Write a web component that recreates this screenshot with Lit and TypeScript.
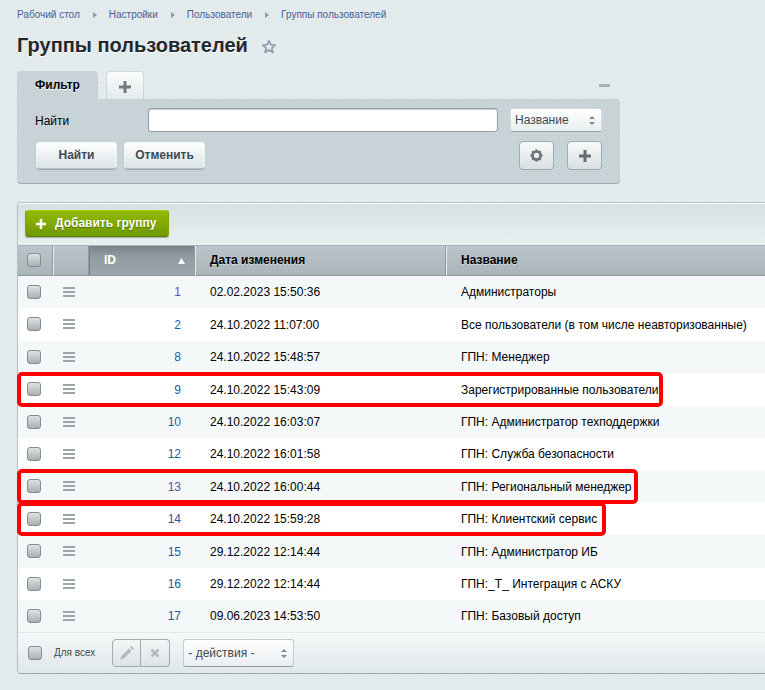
import { LitElement, html, css, svg, nothing } from "lit";
import { customElement } from "lit/decorators.js";
import { classMap } from "lit/directives/class-map.js";
import { styleMap } from "lit/directives/style-map.js";

interface Group {
  id: number;
  date: string;
  name: string;
  visited?: boolean;
  /* width of the red outline round the row */
  marked?: number;
}

const groups: Group[] = [
  { id: 1, date: "02.02.2023 15:50:36", name: "Администраторы", visited: true },
  { id: 2, date: "24.10.2022 11:07:00", name: "Все пользователи (в том числе неавторизованные)" },
  { id: 8, date: "24.10.2022 15:48:57", name: "ГПН: Менеджер" },
  { id: 9, date: "24.10.2022 15:43:09", name: "Зарегистрированные пользователи", marked: 646 },
  { id: 10, date: "24.10.2022 16:03:07", name: "ГПН: Администратор техподдержки" },
  { id: 12, date: "24.10.2022 16:01:58", name: "ГПН: Служба безопасности" },
  { id: 13, date: "24.10.2022 16:00:44", name: "ГПН: Региональный менеджер", visited: true, marked: 621 },
  { id: 14, date: "24.10.2022 15:59:28", name: "ГПН: Клиентский сервис", marked: 589 },
  { id: 15, date: "29.12.2022 12:14:44", name: "ГПН: Администратор ИБ" },
  { id: 16, date: "29.12.2022 12:14:44", name: "ГПН:_T_ Интеграция с АСКУ" },
  { id: 17, date: "09.06.2023 14:53:50", name: "ГПН: Базовый доступ" },
];

const crumbs = ["Рабочий стол", "Настройки", "Пользователи", "Группы пользователей"];

const plus = (color: string, size = 12) => html`<svg width=${size} height=${size} viewBox="0 0 12 12" aria-hidden="true">
  <path d="M4.5 0h3v4.5H12v3H7.5V12h-3V7.5H0v-3h4.5z" fill=${color} />
</svg>`;

const updown = html`<svg class="updown" width="6" height="9" viewBox="0 0 6 9" aria-hidden="true">
  <path d="M3 0l3 3H0zM3 9L0 6h6z" fill="#7d8a90" />
</svg>`;

const teeth = [0, 45, 90, 135, 180, 225, 270, 315].map(
  (a) => svg`<rect x="5" y="0.5" width="3" height="3" rx="1" transform=${`rotate(${a} 6.5 6.5)`} fill="#6b757a" />`
);

@customElement("app-root")
export class AppRoot extends LitElement {
  static styles = css`
    :host {
      display: block;
      box-sizing: border-box;
      min-height: 100vh;
      padding: 9px 0 16px 17px;
      overflow: hidden;
      background: #e3ebed;
      background-image: radial-gradient(#dfe8ea 1px, transparent 1px);
      background-size: 3px 5px;
      color: #000;
      font: 12px/16px "Liberation Sans", Arial, sans-serif;
    }
    * { box-sizing: border-box; }
    svg { display: block; flex: none; }
    button, input, select { margin: 0; font: inherit; color: inherit; }
    .crumbs { display: flex; align-items: center; font-size: 10px; line-height: 12px; }
    .crumbs a { color: #4a5f96; text-decoration: none; }
    .crumbs svg { margin: 0 12px 0 13px; }
    .title { display: flex; align-items: center; gap: 13px; margin-top: 12px; }
    h1 { margin: 0; font-size: 20px; line-height: 24px; color: #23282d; text-shadow: 0 1px 0 #fff; }
    .plain { display: flex; padding: 0; border: 0; background: none; }
    .title .plain { margin-top: 3px; }

    .filter { max-width: 603px; margin-top: 14px; }
    .tabs { display: flex; gap: 8px; height: 28px; }
    .tab {
      width: 81px; padding: 0; border: 0; border-radius: 4px 4px 0 0;
      font-weight: bold; text-shadow: 0 1px 0 #fff;
    }
    .add-tab {
      display: flex; align-items: center; justify-content: center;
      width: 38px; padding: 2px 0 0; border: 1px solid #ced7d9; border-bottom: 0;
      border-radius: 4px 4px 0 0; background: linear-gradient(#fbfcfc, #e3eaec);
    }
    .fold { margin: 13px 10px 0 auto; width: 11px; height: 3px; align-self: flex-start; border: 0; padding: 0; background: #a9b3b7; }
    .dots {
      background-color: #cad5d9;
      background-image: linear-gradient(#bdc8cc, #bdc8cc), linear-gradient(#bdc8cc, #bdc8cc);
      background-image: conic-gradient(from 0deg at 1px 1px, transparent 75%, #bcc7cb 0), conic-gradient(from 0deg at 1px 1px, transparent 75%, #bcc7cb 0);
      background-size: 4px 4px;
      background-position: 0 0, 2px 2px;
    }
    .box { padding: 9px 18px 13px; border-bottom: 1px solid #9faaae; border-radius: 0 4px 4px 4px; }
    .line { display: flex; align-items: center; }
    .line + .line { margin-top: 9px; }
    .line label { width: 113px; flex: none; padding-top: 1px; }
    .text {
      flex: 1; min-width: 0; height: 24px; padding: 0 6px; border: 1px solid #919ca5;
      border-radius: 3px; background: #fff; box-shadow: inset 0 1px 1px #c8ced2;
    }
    .pick { display: flex; align-items: center; position: relative; }
    .pick select {
      appearance: none; width: 92px; height: 24px; padding: 0 20px 0 4px; border: 1px solid #d5dcdf;
      border-bottom-color: #929da2; border-radius: 3px; background: linear-gradient(#fff, #e9eef0); color: #3d4a54;
    }
    .pick .updown { position: absolute; right: 7px; top: 8px; pointer-events: none; }
    .line .pick { margin-left: 12px; }
    .push {
      width: 81px; height: 27px; margin-right: 7px; padding: 0 0 2px; border: 1px solid #f3f6f7; border-bottom-color: #b4bfc3;
      border-radius: 4px; background: linear-gradient(#fdfefe, #dbe3e6); box-shadow: 0 1px 1px #98a4a8;
      color: #3f4b54; font-weight: bold;
    }
    .line .push:first-child { margin-left: 1px; }
    .square {
      display: flex; align-items: center; justify-content: center; width: 35px; height: 29px; padding: 0;
      border: 1px solid #9fabae; border-radius: 4px; background: linear-gradient(#f8fafa, #d9e0e2);
    }
    .square + .square { margin-left: 13px; }
    .end { margin-left: auto; }

    .grid { margin-top: 18px; border: 1px solid #b4c1c2; border-right: 0; border-bottom-color: #9ba6a9; border-radius: 4px 0 0 4px; }
    .toolbar {
      padding: 6px 7px; height: 43px; border-top: 1px solid #fff; border-bottom: 1px solid #a5b6c2; border-radius: 4px 0 0 0;
      background: linear-gradient(#d6e1e2, #e9eff1);
    }
    .green {
      display: flex; align-items: center; gap: 9px; height: 27px; padding: 0 12px 1px 10px; border: 1px solid #7ea60f;
      border-top-color: #a9cc12; border-bottom-color: #5d8200; border-radius: 3px; background: linear-gradient(#93b900, #6f9a00);
      box-shadow: 0 1px 1px #a2acae; color: #fff; font-weight: bold; text-shadow: 0 1px 1px #4c6b00; white-space: nowrap;
    }
    .green svg { margin-top: 2px; }
    table { width: 100%; border-collapse: separate; border-spacing: 0; table-layout: fixed; }
    .c-check { width: 35px; }
    .c-menu { width: 36px; }
    .c-id { width: 106px; }
    .c-date { width: 251px; }
    th, td { padding: 0 14px; text-align: left; vertical-align: middle; white-space: nowrap; }
    th {
      height: 30px; padding: 0 15px 2px 14px; border-bottom: 1px solid #8b979b; border-left: 1px solid #e6ecee; border-right: 1px solid #8f9b9f;
      background: linear-gradient(#b9c5ca, #a9b5b8); text-shadow: 0 1px 0 #d5dddf;
    }
    th.first { border-left: 0; }
    th.last { border-right: 0; }
    th.sorted { padding-right: 9px; border-left-color: #747f88; background: linear-gradient(#798489, #929da3 40%, #9ba6ac); color: #fff; text-shadow: none; }
    .sort { display: flex; align-items: center; justify-content: space-between; }
    .sort svg { margin-top: 2px; }
    tr { position: relative; }
    td { height: 32px; background: #fff; padding-left: 15px; }
    tr:nth-child(odd) > td { background: #f4f8f9; }
    tr:nth-child(5n + 2) > td, tr:nth-child(5n + 4) > td { height: 33px; }
    th.check, td.check { padding: 0 0 1px 9px; }
    th.check { padding-bottom: 2px; }
    td.menu { padding: 0 0 1px 10px; }
    td.num { text-align: right; }
    td.num a { color: #1f5a9f; text-decoration: none; }
    td.num a.visited { color: #6a4aa5; }
    .mark {
      position: absolute; left: -1px; top: -1px; bottom: -1px; z-index: 1;
      border: 4px solid #f00; border-radius: 5px; pointer-events: none;
    }
    .tick {
      appearance: none; display: block; width: 14px; height: 14px; border: 1px solid #838d92; border-radius: 3px;
      background: linear-gradient(#dfe3e4, #a9b0b4);
    }
    .footer {
      display: flex; align-items: center; height: 41px; padding: 0 10px; border-top: 1px solid #e3e9eb;
      border-radius: 0 0 0 4px; background: linear-gradient(#f6f8f9, #dfe7ea);
    }
    .footer .all { margin-left: 12px; font-size: 10px; line-height: 12px; color: #404b52; }
    .pair { display: flex; margin-left: 17px; }
    .pair .square { width: 29px; height: 28px; border-radius: 4px 0 0 4px; background: linear-gradient(#f4f6f7, #dce3e5); }
    .pair .square + .square { margin-left: 0; border-left: 0; border-radius: 0 4px 4px 0; }
    .footer .pick { margin-left: 13px; }
    .footer select { width: 111px; height: 28px; border-color: #c3ccd0; border-bottom-color: #929da2; }
    .footer .updown { top: 10px; }
  `;

  render() {
    return html`
      <nav class="crumbs">
        ${crumbs.map(
          (c, i) => html`${i
              ? html`<svg width="4" height="6" viewBox="0 0 4 6" aria-hidden="true"><path d="M0 0l4 3-4 3z" fill="#8f999f" /></svg>`
              : nothing}<a href="#">${c}</a>`
        )}
      </nav>
      <div class="title">
        <h1>Группы пользователей</h1>
        <button class="plain" aria-label="В избранное">
          <svg width="16" height="15" viewBox="0 0 16 15"><path d="M8 1.800l1.800 3.900 4.400.4-3.300 2.900 1 4.400L8 11.100l-3.900 2.300 1-4.400L1.800 6.100l4.400-.4z" fill="none" stroke="#949faf" stroke-width="1.800" stroke-linejoin="round" /></svg>
        </button>
      </div>

      <form class="filter" @submit=${(e: Event) => e.preventDefault()}>
        <div class="tabs">
          <button type="button" class="tab dots">Фильтр</button>
          <button type="button" class="add-tab" aria-label="Добавить фильтр">${plus("#717b7f")}</button>
          <button type="button" class="fold" aria-label="Свернуть"></button>
        </div>
        <div class="box dots">
          <div class="line">
            <label for="find">Найти</label>
            <input id="find" class="text" type="text" />
            <div class="pick">
              <select aria-label="Поле поиска"><option>Название</option></select>${updown}
            </div>
          </div>
          <div class="line">
            <button class="push">Найти</button>
            <button type="reset" class="push">Отменить</button>
            <button type="button" class="square end" aria-label="Настройки">
              <svg width="13" height="13" viewBox="0 0 13 13">${teeth}<circle cx="6.500" cy="6.500" r="4" fill="none" stroke="#6b757a" stroke-width="2.500" /></svg>
            </button>
            <button type="button" class="square" aria-label="Добавить условие">${plus("#646d71")}</button>
          </div>
        </div>
      </form>

      <section class="grid">
        <div class="toolbar">
          <button class="green">${plus("#fff", 10)}Добавить группу</button>
        </div>
        <table>
          <colgroup>
            <col class="c-check" /><col class="c-menu" /><col class="c-id" /><col class="c-date" /><col />
          </colgroup>
          <thead>
            <tr>
              <th class="check first"><input class="tick" type="checkbox" aria-label="Выбрать все" /></th>
              <th></th>
              <th class="sorted" aria-sort="ascending">
                <div class="sort">ID<svg width="7" height="6" viewBox="0 0 7 6"><path d="M3.500 0L7 6H0z" fill="#fff" /></svg></div>
              </th>
              <th>Дата изменения</th>
              <th class="last">Название</th>
            </tr>
          </thead>
          <tbody>
            ${groups.map(
              (g) => html`<tr>
                <td class="check">
                  <input class="tick" type="checkbox" aria-label=${g.name} />
                  ${g.marked ? html`<span class="mark" style=${styleMap({ width: `${g.marked}px` })}></span>` : nothing}
                </td>
                <td class="menu">
                  <button class="plain" aria-label="Действия">
                    <svg width="12" height="10" viewBox="0 0 12 10"><path d="M0 0h12v2H0zM0 4h12v2H0zM0 8h12v2H0z" fill="#9ba6aa" /></svg>
                  </button>
                </td>
                <td class="num"><a href="#" class=${classMap({ visited: !!g.visited })}>${g.id}</a></td>
                <td>${g.date}</td>
                <td>${g.name}</td>
              </tr>`
            )}
          </tbody>
        </table>
        <div class="footer">
          <input id="all" class="tick" type="checkbox" /><label class="all" for="all">Для всех</label>
          <div class="pair">
            <button class="square" aria-label="Изменить">
              <svg width="14" height="14" viewBox="0 0 14 14"><path d="M0 14l1.500-4L9 2.500 11.500 5 4 12.500zM10 1.500L11.500 0 14 2.500 12.500 4z" fill="#b3babd" /></svg>
            </button>
            <button class="square" aria-label="Удалить">
              <svg width="10" height="10" viewBox="0 0 10 10"><path d="M1.500 1.500l7 7M8.500 1.500l-7 7" stroke="#b3babd" stroke-width="2.500" /></svg>
            </button>
          </div>
          <div class="pick">
            <select aria-label="Действие"><option>- действия -</option></select>${updown}
          </div>
        </div>
      </section>
    `;
  }
}
